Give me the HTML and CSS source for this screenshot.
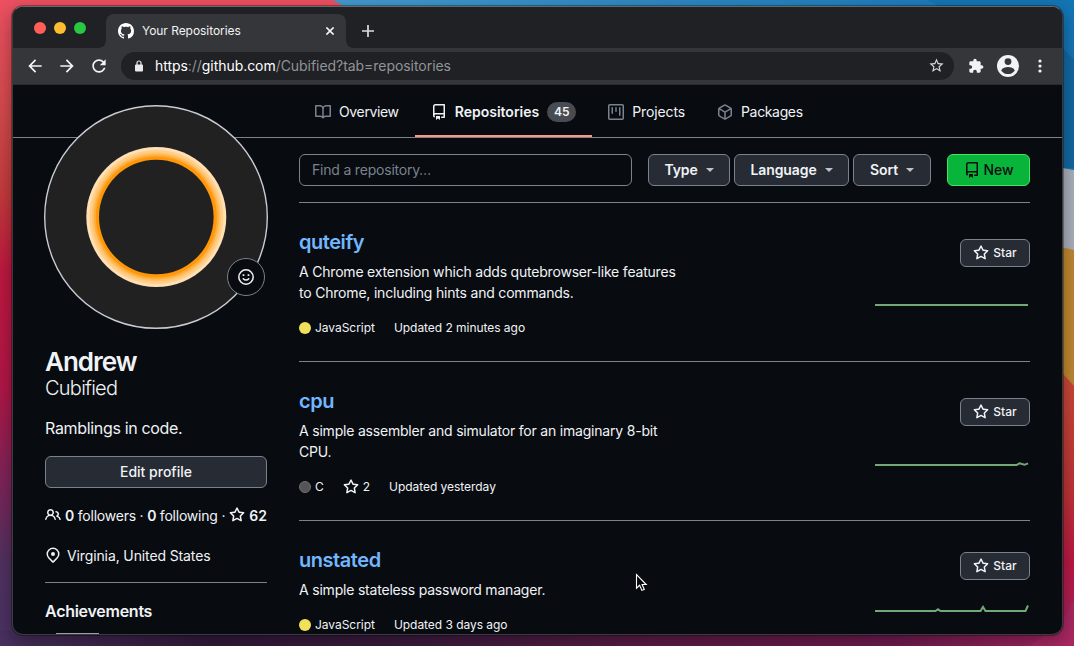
FILE: index.html
```html
<!DOCTYPE html>
<html lang="en">
<head>
<meta charset="utf-8">
<title>Your Repositories</title>
<link rel="stylesheet" href="styles.css">
</head>
<body>
<svg class="sprite" width="0" height="0" aria-hidden="true">
  <symbol id="star" viewBox="0 0 16 16"><path fill-rule="evenodd" d="M8 .25a.75.75 0 01.673.418l1.882 3.815 4.21.612a.75.75 0 01.416 1.279l-3.046 2.97.719 4.192a.75.75 0 01-1.088.791L8 12.347l-3.766 1.98a.75.75 0 01-1.088-.79l.72-4.194L.818 6.374a.75.75 0 01.416-1.28l4.21-.611L7.327.668A.75.75 0 018 .25zm0 2.445L6.615 5.5a.75.75 0 01-.564.41l-3.097.45 2.24 2.184a.75.75 0 01.216.664l-.528 3.084 2.769-1.456a.75.75 0 01.698 0l2.77 1.456-.53-3.084a.75.75 0 01.216-.664l2.24-2.183-3.096-.45a.75.75 0 01-.564-.41L8 2.694v.001z"/></symbol>
  <symbol id="repo" viewBox="0 0 16 16"><path fill-rule="evenodd" d="M2 2.5A2.5 2.5 0 014.5 0h8.75a.75.75 0 01.75.75v12.5a.75.75 0 01-.75.75h-2.5a.75.75 0 110-1.5h1.75v-2h-8a1 1 0 00-.714 1.7.75.75 0 01-1.072 1.05A2.495 2.495 0 012 11.5v-9zm10.5-1V9h-8c-.356 0-.694.074-1 .208V2.5a1 1 0 011-1h8zM5 12.25v3.25a.25.25 0 00.4.2l1.45-1.087a.25.25 0 01.3 0L8.6 15.7a.25.25 0 00.4-.2v-3.25a.25.25 0 00-.25-.25h-3.5a.25.25 0 00-.25.25z"/></symbol>
  <symbol id="book" viewBox="0 0 16 16"><path fill-rule="evenodd" d="M0 1.75A.75.75 0 01.75 1h4.253c1.227 0 2.317.59 3 1.501A3.744 3.744 0 0111.006 1h4.245a.75.75 0 01.75.75v10.5a.75.75 0 01-.75.75h-4.507a2.25 2.25 0 00-1.591.659l-.622.621a.75.75 0 01-1.06 0l-.622-.621A2.25 2.25 0 005.258 13H.75a.75.75 0 01-.75-.75V1.75zm8.755 3a2.25 2.25 0 012.25-2.25H14.5v9h-3.757c-.71 0-1.4.201-1.992.572l.004-7.322zm-1.504 7.324l.004-5.073-.002-2.253A2.25 2.25 0 005.003 2.5H1.5v9h3.757a3.75 3.75 0 011.994.574z"/></symbol>
  <symbol id="project" viewBox="0 0 16 16"><path fill-rule="evenodd" d="M1.75 0A1.75 1.75 0 000 1.75v12.5C0 15.216.784 16 1.75 16h12.5A1.75 1.75 0 0016 14.25V1.75A1.75 1.75 0 0014.25 0H1.75zM1.5 1.75a.25.25 0 01.25-.25h12.5a.25.25 0 01.25.25v12.5a.25.25 0 01-.25.25H1.75a.25.25 0 01-.25-.25V1.75zM11.75 3a.75.75 0 00-.75.75v7.5a.75.75 0 001.5 0v-7.5a.75.75 0 00-.75-.75zm-8.25.75a.75.75 0 011.5 0v5.5a.75.75 0 01-1.5 0v-5.5zM8 3a.75.75 0 00-.75.75v3.5a.75.75 0 001.5 0v-3.5A.75.75 0 008 3z"/></symbol>
  <symbol id="package" viewBox="0 0 16 16"><path fill-rule="evenodd" d="M8.878.392a1.75 1.75 0 00-1.756 0l-5.25 3.045A1.75 1.75 0 001 4.951v6.098c0 .624.332 1.2.872 1.514l5.25 3.045a1.75 1.75 0 001.756 0l5.25-3.045c.54-.313.872-.89.872-1.514V4.951c0-.624-.332-1.2-.872-1.514L8.878.392zM7.875 1.69a.25.25 0 01.25 0l4.63 2.685L8 7.133 3.245 4.375l4.63-2.685zM2.5 5.677v5.372c0 .09.047.171.125.216l4.625 2.683V8.432L2.5 5.677zm6.25 8.271l4.625-2.683a.25.25 0 00.125-.216V5.677L8.75 8.432v5.516z"/></symbol>
  <symbol id="people" viewBox="0 0 16 16"><path fill-rule="evenodd" d="M5.5 3.5a2 2 0 100 4 2 2 0 000-4zM2 5.5a3.5 3.5 0 115.898 2.549 5.507 5.507 0 013.034 4.084.75.75 0 11-1.482.235 4.001 4.001 0 00-7.9 0 .75.75 0 01-1.482-.236A5.507 5.507 0 013.102 8.05 3.49 3.49 0 012 5.5zM11 4a.75.75 0 100 1.5 1.5 1.5 0 01.666 2.844.75.75 0 00-.416.672v.352a.75.75 0 00.574.73c1.2.289 2.162 1.2 2.522 2.372a.75.75 0 101.434-.44 5.01 5.01 0 00-2.56-3.012A3 3 0 0011 4z"/></symbol>
  <symbol id="location" viewBox="0 0 16 16"><path fill-rule="evenodd" d="M11.536 3.464a5 5 0 010 7.072L8 14.07l-3.536-3.535a5 5 0 117.072-7.072v.001zm1.06 8.132a6.5 6.5 0 10-9.192 0l3.535 3.536a1.5 1.5 0 002.122 0l3.535-3.536zM8 9a2 2 0 100-4 2 2 0 000 4z"/></symbol>
</svg>

<svg class="wallpaper" width="1074" height="646" viewBox="0 0 1074 646" aria-hidden="true">
  <defs>
    <linearGradient id="wl" x1="0" y1="0" x2="0" y2="1">
      <stop offset="0" stop-color="#ec5062"/><stop offset=".18" stop-color="#d2494b"/><stop offset=".3" stop-color="#c33a3c"/><stop offset=".42" stop-color="#bd183f"/><stop offset=".6" stop-color="#b01647"/><stop offset=".74" stop-color="#7e2459"/><stop offset=".87" stop-color="#50315f"/><stop offset="1" stop-color="#4a3264"/>
    </linearGradient>
    <linearGradient id="wt" x1="0" y1="0" x2="1" y2="0">
      <stop offset="0" stop-color="#4399cd"/><stop offset="1" stop-color="#1474b5"/>
    </linearGradient>
    <linearGradient id="wb" x1="0" y1="0" x2="1" y2="0">
      <stop offset="0" stop-color="#48305f"/><stop offset=".2" stop-color="#33193b"/><stop offset=".4" stop-color="#3d1b40"/><stop offset=".6" stop-color="#5a1b47"/><stop offset=".85" stop-color="#711b50"/><stop offset="1" stop-color="#a52460"/>
    </linearGradient>
    <linearGradient id="wr" x1="0" y1="0" x2="0" y2="1">
      <stop offset="0" stop-color="#c84a37"/><stop offset=".45" stop-color="#bd3335"/><stop offset=".7" stop-color="#b91843"/><stop offset="1" stop-color="#a32562"/>
    </linearGradient>
  </defs>
  <rect width="360" height="646" fill="url(#wl)"/>
  <path d="M333 0H1074V170H350V10z" fill="url(#wt)"/>
  <path d="M928 0H1074V168H1050V12H950z" fill="#1475b4"/>
  <path d="M1056 40V168L1074 168V60z" fill="#125d93" opacity=".6"/>
  <path d="M1056 167L1074 170V260H1056z" fill="#a9afba"/>
  <path d="M1056 246L1074 250V390H1056z" fill="#bd8730"/>
  <path d="M1056 366L1074 386V646H1056z" fill="url(#wr)"/>
  <rect y="630" width="1062" height="16" fill="url(#wb)"/>
  <path d="M1030 646L1062 622L1074 600V646z" fill="#a92762"/>
</svg>

<div class="window">
  <div class="tabstrip">
    <div class="lights"><i class="light red"></i><i class="light yellow"></i><i class="light green"></i></div>
    <div class="tab">
      <svg width="16" height="16" viewBox="0 0 16 16" fill="#fff"><path fill-rule="evenodd" d="M8 0C3.58 0 0 3.58 0 8c0 3.54 2.29 6.53 5.47 7.59.4.07.55-.17.55-.38 0-.19-.01-.82-.01-1.49-2.01.37-2.53-.49-2.69-.94-.09-.23-.48-.94-.82-1.13-.28-.15-.68-.52-.01-.53.63-.01 1.08.58 1.23.82.72 1.21 1.87.87 2.33.66.07-.52.28-.87.51-1.07-1.78-.2-3.64-.89-3.64-3.95 0-.87.31-1.59.82-2.15-.08-.2-.36-1.02.08-2.12 0 0 .67-.21 2.2.82.64-.18 1.32-.27 2-.27.68 0 1.36.09 2 .27 1.53-1.04 2.2-.82 2.2-.82.44 1.1.16 1.92.08 2.12.51.56.82 1.27.82 2.15 0 3.07-1.87 3.75-3.65 3.95.29.25.54.73.54 1.48 0 1.07-.01 1.93-.01 2.2 0 .21.15.46.55.38A8.013 8.013 0 0016 8c0-4.42-3.58-8-8-8z"/></svg>
      <span class="tab-title">Your Repositories</span>
      <svg width="8" height="8" viewBox="0 0 8 8" stroke="#f1f3f4" stroke-width="1.6"><path d="M.4.4l7.2 7.2M7.6.4L.4 7.6"/></svg>
    </div>
    <svg class="plus" width="12" height="12" viewBox="0 0 12 12" stroke="#dcdde0" stroke-width="1.7"><path d="M6 0v12M0 6h12"/></svg>
  </div>

  <div class="toolbar">
    <svg width="20" height="20" viewBox="0 0 24 24" fill="#f1f3f4"><path d="M20 11H7.83l5.59-5.59L12 4l-8 8 8 8 1.41-1.41L7.83 13H20v-2z"/></svg>
    <svg width="20" height="20" viewBox="0 0 24 24" fill="#f1f3f4"><path d="M12 4l-1.41 1.41L16.17 11H4v2h12.17l-5.58 5.59L12 20l8-8z"/></svg>
    <svg width="20" height="20" viewBox="0 0 24 24" fill="#f1f3f4"><path d="M17.65 6.35C16.2 4.9 14.21 4 12 4c-4.42 0-7.99 3.58-7.99 8s3.57 8 7.99 8c3.73 0 6.84-2.55 7.73-6h-2.08c-.82 2.33-3.04 4-5.65 4-3.31 0-6-2.69-6-6s2.69-6 6-6c1.66 0 3.14.69 4.22 1.78L13 11h7V4l-2.35 2.35z"/></svg>
    <div class="omnibox">
      <svg width="8" height="12" viewBox="0 0 8 12"><path d="M2 5V3a2 2 0 014 0v2" fill="none" stroke="#e8eaed" stroke-width="1.2"/><rect y="4.4" width="8" height="7.2" rx="1" fill="#e8eaed"/></svg>
      <span class="url"><b>https</b>://<b>github.com</b>/Cubified?tab=repositories</span>
      <svg width="17" height="17" viewBox="0 0 24 24" fill="#d5d7da"><path d="M22 9.24l-7.19-.62L12 2 9.19 8.63 2 9.24l5.46 4.73L5.82 21 12 17.27 18.18 21l-1.63-7.03L22 9.24zM12 15.4l-3.76 2.27 1-4.28-3.32-2.88 4.38-.38L12 6.1l1.71 4.04 4.38.38-3.32 2.88 1 4.28L12 15.4z"/></svg>
    </div>
    <svg class="puzzle" width="16" height="16" viewBox="0 0 24 24" fill="#f1f3f4"><path d="M20.5 11H19V7c0-1.1-.9-2-2-2h-4V3.5C13 2.12 11.88 1 10.5 1S8 2.12 8 3.5V5H4c-1.1 0-1.99.9-1.99 2v3.8H3.5c1.49 0 2.7 1.21 2.7 2.7s-1.21 2.7-2.7 2.7H2V20c0 1.1.9 2 2 2h3.8v-1.5c0-1.49 1.21-2.7 2.7-2.7 1.49 0 2.7 1.21 2.7 2.7V22H17c1.1 0 2-.9 2-2v-4h1.5c1.38 0 2.5-1.12 2.5-2.5S21.88 11 20.5 11z"/></svg>
    <svg class="account" width="22" height="22" viewBox="0 0 22 22"><circle cx="11" cy="11" r="11" fill="#f1f3f4"/><circle cx="11" cy="6.6" r="3.4" fill="#35363a"/><path d="M4.2 15.4C5.2 13 8.6 12 11 12s5.800 1 6.800 3.400C16.200 17.800 13.800 19 11 19s-5.200-1.200-6.800-3.600z" fill="#35363a"/></svg>
    <svg width="4" height="14" viewBox="0 0 4 14" fill="#f1f3f4"><circle cx="2" cy="2" r="1.6"/><circle cx="2" cy="7" r="1.6"/><circle cx="2" cy="12" r="1.6"/></svg>
  </div>

  <div class="page">
    <nav class="tabs">
      <a class="nav-item"><svg class="icon dim"><use href="#book"/></svg><span class="t-overview">Overview</span></a>
      <a class="nav-item selected"><svg class="icon"><use href="#repo"/></svg><span>Repositories</span><span class="counter">45</span></a>
      <a class="nav-item"><svg class="icon dim"><use href="#project"/></svg><span class="t-projects">Projects</span></a>
      <a class="nav-item"><svg class="icon dim"><use href="#package"/></svg><span class="t-packages">Packages</span></a>
    </nav>

    <div class="columns">
      <aside class="profile">
        <div class="avatar">
          <svg width="224" height="224" viewBox="0 0 224 224">
            <circle cx="112" cy="112" r="111.300" fill="#212122" stroke="#c9ccd3" stroke-width="1.400"/>
            <circle cx="112.300" cy="112" r="70" fill="#ffdfb3"/>
            <circle cx="112.300" cy="112" r="67" fill="#ffcf8a"/>
            <circle cx="112.300" cy="112" r="64.500" fill="#ffc06a"/>
            <circle cx="112.300" cy="112" r="62.500" fill="#ffad3b"/>
            <circle cx="112.300" cy="112" r="60.500" fill="#ff9708"/>
            <circle cx="112.300" cy="112" r="57.300" fill="#212122"/>
          </svg>
          <span class="status">
            <svg width="16" height="16" viewBox="0 0 16 16" fill="none" stroke="#f0f3f6" stroke-width="1.5"><circle cx="8" cy="8" r="7.200"/><path d="M5.300 9.700c1.300 1.800 4.100 1.800 5.400 0" stroke-linecap="round"/><path d="M5.500 5.200v1.800M10.500 5.200v1.800" stroke-width="1.700"/></svg>
          </span>
        </div>
        <h1 class="name">Andrew</h1>
        <p class="login">Cubified</p>
        <p class="bio">Ramblings in code.</p>
        <button class="btn edit">Edit profile</button>
        <p class="follow"><svg class="icon"><use href="#people"/></svg><span class="counts"><b>0</b> followers · <b>0</b> following ·</span><svg class="icon"><use href="#star"/></svg><b>62</b></p>
        <p class="place"><svg class="icon"><use href="#location"/></svg><span>Virginia, United States</span></p>
        <h2 class="achievements">Achievements</h2>
        <div class="badge-top"></div>
      </aside>

      <main class="repos">
        <div class="filters">
          <div class="search">Find a repository…</div>
          <button class="btn type">Type<i class="caret"></i></button>
          <button class="btn language">Language<i class="caret"></i></button>
          <button class="btn sort">Sort<i class="caret"></i></button>
          <button class="btn new"><svg class="icon"><use href="#repo"/></svg>New</button>
        </div>

        <article class="repo">
          <div class="info">
            <h3>quteify</h3>
            <p class="desc">A Chrome extension which adds qutebrowser-like features<br>to Chrome, including hints and commands.</p>
            <p class="meta"><span class="lang"><i class="dot js"></i>JavaScript</span><span>Updated 2 minutes ago</span></p>
          </div>
          <div class="side">
            <button class="btn star"><svg class="icon"><use href="#star"/></svg>Star</button>
            <svg class="spark" width="155" height="20" viewBox="0 0 155 20"><path d="M0 10H153"/></svg>
          </div>
        </article>

        <article class="repo">
          <div class="info">
            <h3>cpu</h3>
            <p class="desc">A simple assembler and simulator for an imaginary 8-bit<br>CPU.</p>
            <p class="meta"><span class="lang"><i class="dot c"></i>C</span><span class="stars"><svg class="icon"><use href="#star"/></svg>2</span><span>Updated yesterday</span></p>
          </div>
          <div class="side">
            <button class="btn star"><svg class="icon"><use href="#star"/></svg>Star</button>
            <svg class="spark" width="155" height="20" viewBox="0 0 155 20"><path d="M0 11H141.500L144.500 9.300L149.500 10.800L153 9.300"/></svg>
          </div>
        </article>

        <article class="repo short">
          <div class="info">
            <h3>unstated</h3>
            <p class="desc">A simple stateless password manager.</p>
            <p class="meta"><span class="lang"><i class="dot js"></i>JavaScript</span><span>Updated 3 days ago</span></p>
          </div>
          <div class="side">
            <button class="btn star"><svg class="icon"><use href="#star"/></svg>Star</button>
            <svg class="spark" width="155" height="20" viewBox="0 0 155 20"><path d="M0 11H60.500L63 9.300L65.500 11H105.500L108 7L110.500 11H150.500L153 5.500"/></svg>
          </div>
        </article>
      </main>
    </div>
  </div>
</div>

<svg class="cursor" width="13" height="20" viewBox="0 0 13 20"><path d="M1.500 1.500V15.200L4.600 12.300L6.900 17.400L9.300 16.400L7.100 11.500H11.200z" fill="#05070a" stroke="#fff" stroke-width="1.100"/></svg>
</body>
</html>
```

FILE: styles.css
```css
* { box-sizing: border-box; }

body {
  margin: 0;
  width: 1074px;
  height: 646px;
  overflow: hidden;
  position: relative;
  background: #33193b;
  font-family: Inter, "Liberation Sans", sans-serif;
  font-size: 14px;
  color: #f0f3f6;
}

h1, h2, h3, p { margin: 0; }
i { font-style: normal; }
svg { display: block; flex: none; }

.sprite, .wallpaper { position: absolute; left: 0; top: 0; }

.window {
  position: absolute;
  left: 12px;
  top: 6px;
  width: 1051px;
  height: 629px;
  border: 1px solid #3a3c41;
  border-top-color: #66686c;
  border-radius: 11px;
  overflow: hidden;
  background: #080b10;
  box-shadow: 0 0 0 1px rgba(0, 0, 0, .3), 0 6px 18px rgba(0, 0, 0, .35);
}

/* browser chrome */
.tabstrip {
  display: flex;
  align-items: flex-start;
  height: 41px;
  background: #202124;
}
.lights { display: flex; gap: 8px; padding: 15px 20px 0 21px; }
.light { width: 12px; height: 12px; border-radius: 50%; }
.red { background: #ff5f57; }
.yellow { background: #febc2e; }
.green { background: #28c840; }

.tab {
  position: relative;
  display: flex;
  align-items: center;
  width: 240px;
  height: 34px;
  margin-top: 7px;
  padding: 0 12px;
  gap: 8px;
  border-radius: 8px 8px 0 0;
  background: #35363a;
}
.tab::before, .tab::after {
  content: "";
  position: absolute;
  bottom: 0;
  width: 7px;
  height: 7px;
}
.tab::before { left: -7px; background: radial-gradient(circle at 0 0, transparent 6.5px, #35363a 7px); }
.tab::after { right: -7px; background: radial-gradient(circle at 100% 0, transparent 6.5px, #35363a 7px); }
.tab-title { flex: 1; padding-bottom: 1px; font-size: 12px; letter-spacing: -.05px; color: #f1f3f4; }
.plus { margin: 18px 0 0 16px; }

.toolbar {
  display: flex;
  align-items: center;
  gap: 12px;
  height: 37px;
  padding: 0 0 1px 12px;
  background: #35363a;
  border-bottom: 1px solid #2a2b2e;
}
.omnibox {
  display: flex;
  align-items: center;
  width: 833px;
  height: 28px;
  padding: 0 9px 0 14px;
  gap: 12px;
  border-radius: 14px;
  background: #202124;
}
.url { flex: 1; font-size: 14px; letter-spacing: -.05px; color: #919498; }
.url b { font-weight: 400; color: #fff; }
.puzzle { margin-left: 2px; }
.account { margin-left: 1px; }
.account + svg { margin-left: 7px; }

/* profile page */
.tabs {
  display: flex;
  height: 53px;
  padding-left: 286px;
  border-bottom: 1px solid #7a828e;
}
.nav-item {
  display: flex;
  align-items: center;
  gap: 8px;
  height: 52px;
  padding: 3px 16px 0;
  border-bottom: 2px solid transparent;
}
.selected { font-weight: 600; border-color: #ff967d; }
.t-overview { letter-spacing: -.36px; }
.t-projects { letter-spacing: -.12px; }
.t-packages { letter-spacing: -.35px; }
.icon { width: 16px; height: 16px; fill: currentColor; }
.dim { color: #7a828e; }
.counter {
  width: 29px;
  height: 20px;
  border-radius: 10px;
  background: #484b51;
  font-size: 12px;
  line-height: 20px;
  text-align: center;
}

.columns { display: flex; padding: 0 32px; }

.profile { width: 222px; margin-right: 32px; }
.avatar {
  position: relative;
  width: 224px;
  height: 224px;
  margin: -33px 0 0 -1px;
}
.status {
  position: absolute;
  left: 183px;
  top: 153px;
  display: grid;
  place-items: center;
  width: 38px;
  height: 38px;
  border: 1px solid #7a828e;
  border-radius: 50%;
  background: #080b10;
}
.name { margin-top: 17px; font-size: 26px; line-height: 31px; font-weight: 600; letter-spacing: -1px; }
.login { font-size: 20px; line-height: 23px; font-weight: 300; letter-spacing: -.75px; }
.bio { margin-top: 16px; font-size: 16px; line-height: 24px; letter-spacing: -.33px; }

.btn {
  display: flex;
  align-items: center;
  justify-content: center;
  height: 32px;
  padding: 0;
  border: 1px solid #7a828e;
  border-radius: 6px;
  background: #272b33;
  color: #f0f3f6;
  font: 500 14px Inter, "Liberation Sans", sans-serif;
}
.edit { width: 222px; margin-top: 16px; padding-bottom: 1px; }
.follow {
  display: flex;
  align-items: center;
  margin-top: 16px;
  height: 22px;
  gap: 4px;
  white-space: nowrap;
}
.follow b { font-weight: 600; }
.counts { letter-spacing: -.22px; }
.place {
  display: flex;
  align-items: center;
  gap: 6px;
  margin-top: 18px;
  height: 22px;
  letter-spacing: -.12px;
}
.achievements {
  margin-top: 16px;
  padding-top: 16px;
  border-top: 1px solid #7a828e;
  font-size: 16px;
  line-height: 24px;
  font-weight: 600;
  letter-spacing: -.27px;
}
.badge-top { width: 43px; height: 2px; margin: 10px 0 0 11px; background: #9a9da3; }

.repos { width: 731px; }
.filters {
  display: flex;
  height: 65px;
  padding-top: 16px;
  border-bottom: 1px solid #7a828e;
}
.search {
  width: 333px;
  height: 32px;
  margin-right: 16px;
  padding-left: 12px;
  border: 1px solid #7a828e;
  border-radius: 6px;
  line-height: 30px;
  letter-spacing: -.2px;
  color: #7a828e;
}
.caret {
  margin: 1px 0 0 8px;
  border: 4px solid transparent;
  border-top-color: #bfc3c9;
  border-bottom: 0;
}
.type { width: 82px; margin-right: 4px; }
.language { width: 115px; margin-right: 4px; }
.sort { width: 78px; margin-right: 16px; }
.new { width: 83px; gap: 4px; border-color: #4ae168; background: #09b43a; color: #0a0c10; }
.filters .btn { padding-bottom: 1px; font-weight: 600; letter-spacing: -.1px; }
.filters .new { font-weight: 500; }
.new .icon { margin-top: 1px; }

.repo {
  display: flex;
  justify-content: space-between;
  height: 159px;
  padding-top: 24px;
  border-bottom: 1px solid #7a828e;
}
.repo h3 { font-size: 20px; line-height: 30px; font-weight: 600; letter-spacing: -.45px; color: #71b7ff; }
.desc { margin-top: 4px; line-height: 21px; letter-spacing: -.2px; white-space: nowrap; }
.meta { display: flex; gap: 19px; margin-top: 16px; font-size: 12px; line-height: 18px; letter-spacing: -.04px; }
.lang, .stars { display: flex; align-items: center; gap: 4px; }
.dot { width: 12px; height: 12px; border-radius: 50%; }
.js { background: #f1e05a; }
.c { background: #555; border: 1px solid #6e7074; }
.side { display: flex; flex-direction: column; align-items: flex-end; padding-top: 12px; }
.star { width: 70px; height: 28px; gap: 4px; padding-bottom: 1px; font-size: 12px; }
.star .icon { margin-top: 1px; }
.spark { margin-top: 28px; fill: none; stroke: #73a879; stroke-width: 2; }
.short .side { padding-top: 7px; }
.short .spark { margin-top: 20px; }

.cursor { position: absolute; left: 635px; top: 573px; }
```
